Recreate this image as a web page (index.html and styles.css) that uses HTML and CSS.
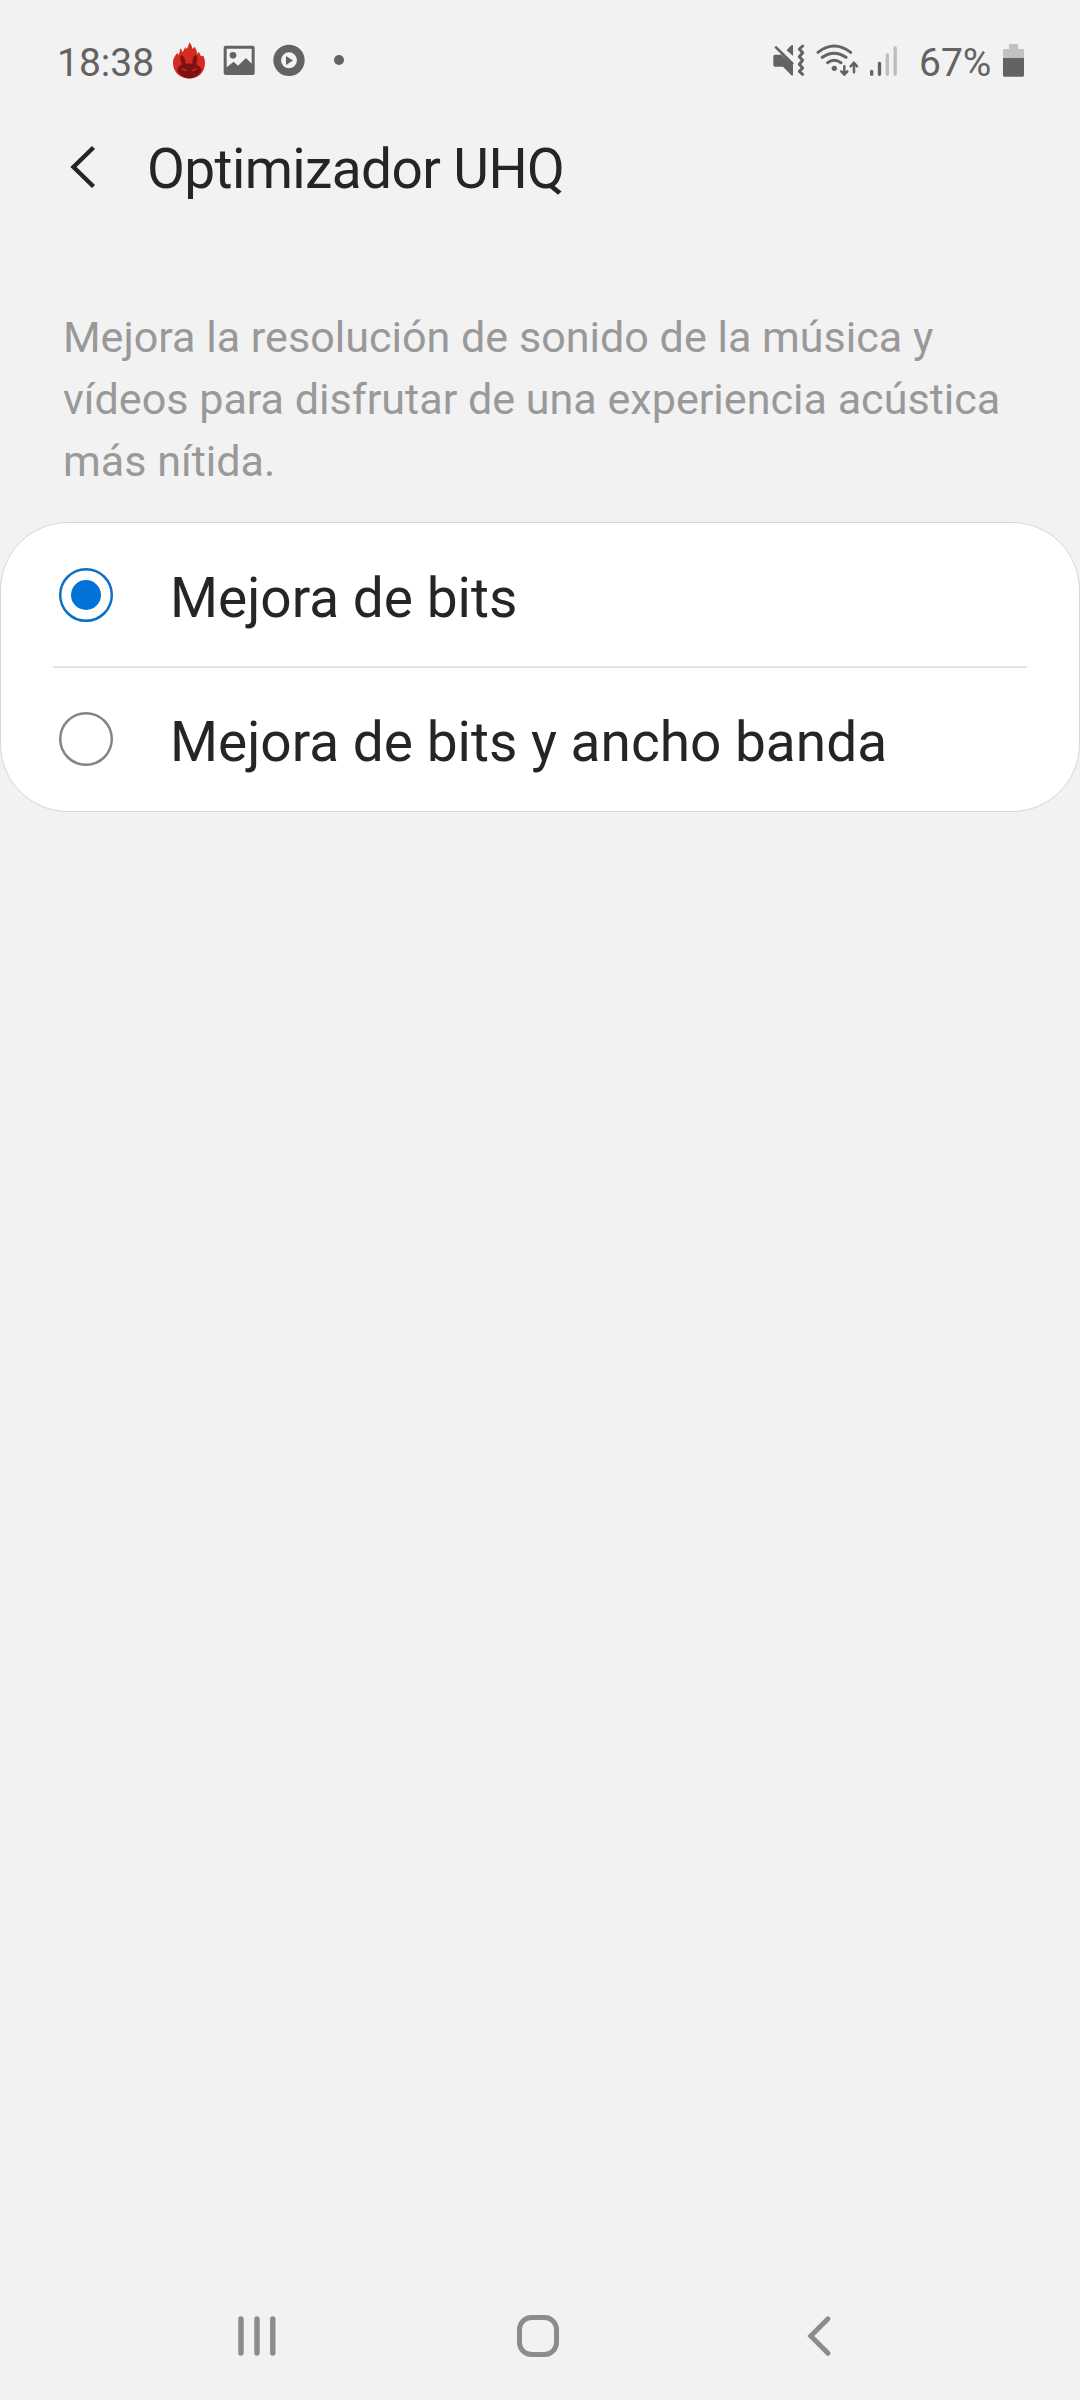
FILE: index.html
```html
<!DOCTYPE html>
<html lang="es">
<head>
<meta charset="utf-8">
<title>Optimizador UHQ</title>
<link rel="stylesheet" href="styles.css">
</head>
<body>
<div class="screen">
  <div class="status">
    <span class="time">18:38</span>
    <div class="notifications">
      <svg width="34" height="60" viewBox="36 0 102 180">
        <path fill="#d52b1e" d="M39 100C38 88 44 78 52 68Q54 72 56 75Q61 64 60 55Q66 60 68 67L76 52Q79 54 80 57Q86 49 88 37Q96 45 98 57L104 50Q111 60 112 72L117 65Q120 75 124 79L130 77Q135 88 135 100C135 128 113 146 88 146S39 128 39 100Z"/>
        <path fill="#7d1216" d="M66 103Q59 90 61 80Q63 74 68 77Q76 84 77 101Q87 99 97 101Q97 84 103 77Q109 73 111 81Q113 92 108 103Q120 108 125 120Q113 145 88 145T51 120Q55 108 66 103Z"/>
        <path fill="none" stroke="#d52b1e" stroke-width="4" d="M66 117L80 122M110 117L96 122"/>
      </svg>
      <svg width="34" height="60" viewBox="186 0 102 180">
        <path fill="#636363" fill-rule="evenodd" d="M197 47H278Q284 47 284 53V129Q284 135 278 135H197Q191 135 191 129V53Q191 47 197 47ZM200 56V112L221 95L234 107L258 84L275 101V56Z"/>
        <circle cx="219" cy="76" r="10" fill="#636363"/>
      </svg>
      <svg width="34" height="60" viewBox="336 0 102 180">
        <circle cx="387" cy="91" r="35.500" fill="none" stroke="#636363" stroke-width="23"/>
        <path fill="#636363" d="M378 78V105L399 91.500Z"/>
      </svg>
      <svg width="34" height="60" viewBox="486 0 102 180"><circle cx="537" cy="90" r="15" fill="#636363"/></svg>
    </div>
    <div class="system">
      <svg width="34" height="60" viewBox="36 0 102 180">
        <path fill="#636363" d="M45 74H64L99 104V133Q99 139 94 136L69 110H45Q40 110 40 105V79Q40 74 45 74ZM99 47V78L80 61L92 47Q98 43 99 47Z"/>
        <path fill="none" stroke="#636363" stroke-width="8" stroke-linecap="round" d="M48 52L97 100"/>
        <path fill="none" stroke="#636363" stroke-width="9" stroke-linecap="round" stroke-linejoin="round" d="M128 48L118 57L128 68L118 80L128 91L118 103L128 114L118 124L128 133"/>
      </svg>
      <svg class="wifi" width="44" height="60" viewBox="168 0 132 180">
        <g fill="none" stroke="#636363" stroke-width="9" stroke-linecap="round" stroke-linejoin="round">
          <path d="M174 67Q222 29 272 67M187 82Q222 57 258 82M203 98Q222 83 243 98"/>
          <path stroke-width="7.500" d="M253 109V132M244 124L253 134L262 124M282 127V101M272 109L282 98L291 109"/>
        </g>
        <circle cx="223" cy="115" r="8" fill="#636363"/>
      </svg>
      <svg class="signal" width="32" height="60" viewBox="324 0 96 180">
        <g fill="none" stroke-width="10" stroke-linecap="round">
          <path stroke="#636363" d="M335 124V133M358.500 100V133"/>
          <path stroke="#bdbdbd" d="M382 75V133M405.500 54V133"/>
        </g>
      </svg>
      <span class="percent">67%</span>
      <svg width="24" height="60" viewBox="306 0 72 180">
        <path fill="#c1c1c1" d="M330 42H351Q354 42 354 45V57H369Q372 57 372 60V84H309V60Q309 57 312 57H327V45Q327 42 330 42Z"/>
        <path fill="#636363" d="M309 84H372V136Q372 140 368 140H313Q309 140 309 136Z"/>
      </svg>
    </div>
  </div>
  <header class="header">
    <svg width="30" height="48" viewBox="0 0 30 48"><path fill="none" stroke="#252525" stroke-width="4.400" d="M25.500 4.500L5.500 24L25.500 43.500"/></svg>
    <h1 class="title">Optimizador UHQ</h1>
  </header>
  <p class="description">Mejora la resolución de sonido de la música y<br>vídeos para disfrutar de una experiencia acústica<br>más nítida.</p>
  <div class="card">
    <div class="option option-selected">
      <svg width="56" height="56" viewBox="0 0 56 56"><circle cx="28" cy="28" r="25.800" fill="none" stroke="#0b70c4" stroke-width="2.500"/><circle cx="28" cy="28" r="15" fill="#0072d8"/></svg>
      <span class="label">Mejora de bits</span>
    </div>
    <div class="divider"></div>
    <div class="option option-last">
      <svg width="56" height="56" viewBox="0 0 56 56"><circle cx="28" cy="28" r="25.800" fill="none" stroke="#858585" stroke-width="2.500"/></svg>
      <span class="label">Mejora de bits y ancho banda</span>
    </div>
  </div>
  <nav class="navbar">
    <svg width="42" height="48" viewBox="0 0 42 48"><path stroke="#8c8c8c" stroke-width="5.400" stroke-linecap="round" d="M5 7V41M21 7V41M36.800 7V41"/></svg>
    <svg class="home" width="48" height="48" viewBox="0 0 48 48"><rect x="5.500" y="5.500" width="37" height="37" rx="12" fill="none" stroke="#8c8c8c" stroke-width="5"/></svg>
    <svg class="back" width="30" height="48" viewBox="0 0 30 48"><path fill="none" stroke="#8c8c8c" stroke-width="5" stroke-linecap="round" d="M24 6.800L6.800 24L24 41.200"/></svg>
  </nav>
</div>
</body>
</html>
```

FILE: styles.css
```css
* { box-sizing: border-box; }
body { margin: 0; background: #f2f2f2; font-family: Roboto, sans-serif; color: #252525; }
svg { display: block; flex: none; }
.screen { width: 1080px; height: 2400px; display: flex; flex-direction: column; }
.status { height: 118px; padding: 30px 54px 0 57px; display: flex; align-items: flex-start; color: #636363; font-size: 39px; line-height: 67px; }
.time { width: 115px; }
.notifications { display: flex; gap: 16px; }
.system { display: flex; margin-left: auto; }
.wifi { margin-left: 10px; }
.signal { margin-left: 8px; }
.percent { width: 102px; padding-left: 19px; }
.header { height: 102px; padding-left: 68px; display: flex; align-items: center; }
.header svg { margin-top: -5px; }
.title { margin: 0 0 0 49px; font-size: 55px; font-weight: 400; line-height: 64px; letter-spacing: -0.6px; }
.description { margin: 87px 0 29px 63px; font-size: 43.1px; line-height: 62px; color: #999; white-space: nowrap; }
.card { height: 290px; border: 1px solid #d5d5d5; border-radius: 68px; background: #fff; display: flex; flex-direction: column; }
.option { height: 143px; display: flex; align-items: center; padding-left: 57px; }
.option-selected { padding-top: 1px; }
.option-last { padding-bottom: 1px; }
.label { margin-left: 56px; padding-top: 6px; font-size: 55px; line-height: 64px; white-space: nowrap; }
.divider { height: 2px; margin: 0 52px; background: #e4e4e4; }
.navbar { height: 128px; margin-top: auto; padding-left: 236px; display: flex; align-items: center; }
.home { margin-left: 236px; }
.back { margin-left: 242px; }
```
